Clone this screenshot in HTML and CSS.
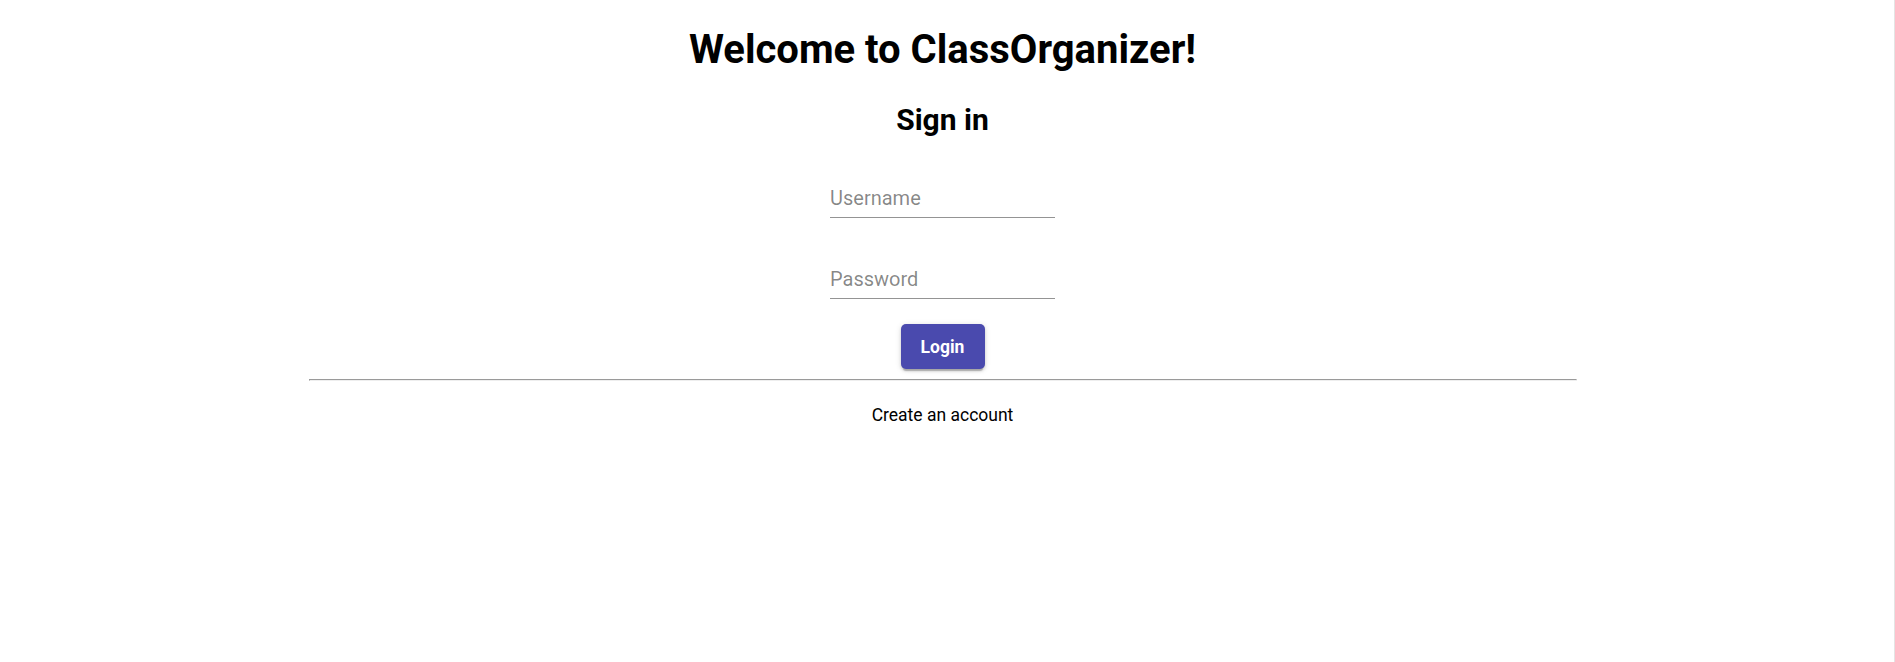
FILE: index.html
```html
<!DOCTYPE html>
<html lang="en">
<head>
<meta charset="utf-8">
<title>ClassOrganizer</title>
<link rel="stylesheet" href="styles.css">
</head>
<body>
  <main class="page">
    <h1 class="title">Welcome to ClassOrganizer!</h1>
    <h2 class="subtitle">Sign in</h2>
    <form class="login">
      <input class="field" type="text" placeholder="Username">
      <input class="field field-second" type="password" placeholder="Password">
      <button class="btn" type="button">Login</button>
    </form>
    <hr class="divider">
    <a class="create" href="#">Create an account</a>
  </main>
</body>
</html>
```

FILE: styles.css
```css
html, body {
  margin: 0;
  padding: 0;
  background: #ffffff;
}

body {
  min-height: 100vh;
  box-sizing: border-box;
  border-right: 1px solid #e4e4e4;
  padding-right: 9px;
  font-family: Roboto, "Liberation Sans", sans-serif;
  color: #000;
}

.page {
  display: flex;
  flex-direction: column;
  align-items: center;
}

.title {
  margin: 26px 0 0;
  font-size: 40px;
  line-height: 47px;
  font-weight: 700;
}

.subtitle {
  margin: 29px 0 0;
  font-size: 30px;
  line-height: 35px;
  font-weight: 700;
}

.login {
  display: flex;
  flex-direction: column;
  align-items: center;
  margin-top: 42px;
}

.field {
  box-sizing: border-box;
  width: 225px;
  height: 39px;
  padding: 0;
  border: none;
  border-bottom: 1px solid #949494;
  outline: none;
  background: transparent;
  font-family: Roboto, "Liberation Sans", sans-serif;
  font-size: 20px;
  color: #000;
}

.field::placeholder {
  color: rgba(0, 0, 0, 0.48);
  opacity: 1;
}

.field-second {
  margin-top: 42px;
}

.btn {
  margin-top: 25px;
  height: 45px;
  min-width: 84px;
  padding: 0 20px;
  border: none;
  border-radius: 5px;
  background: #4a4aae;
  color: #ffffff;
  font-family: Roboto, "Liberation Sans", sans-serif;
  font-size: 17.5px;
  font-weight: 700;
  box-shadow: 0 4px 1px -2px rgba(0, 0, 0, 0.2), 0 2px 3px 0 rgba(0, 0, 0, 0.14), 0 1px 6px 0 rgba(0, 0, 0, 0.12);
  cursor: pointer;
}

.divider {
  width: 1268px;
  box-sizing: border-box;
  margin: 10px 0 0;
  border-style: inset;
  border-width: 1px;
}

.create {
  margin-top: 24px;
  font-size: 17.5px;
  line-height: 20px;
  font-weight: 400;
  color: #000;
  text-decoration: none;
}
```
